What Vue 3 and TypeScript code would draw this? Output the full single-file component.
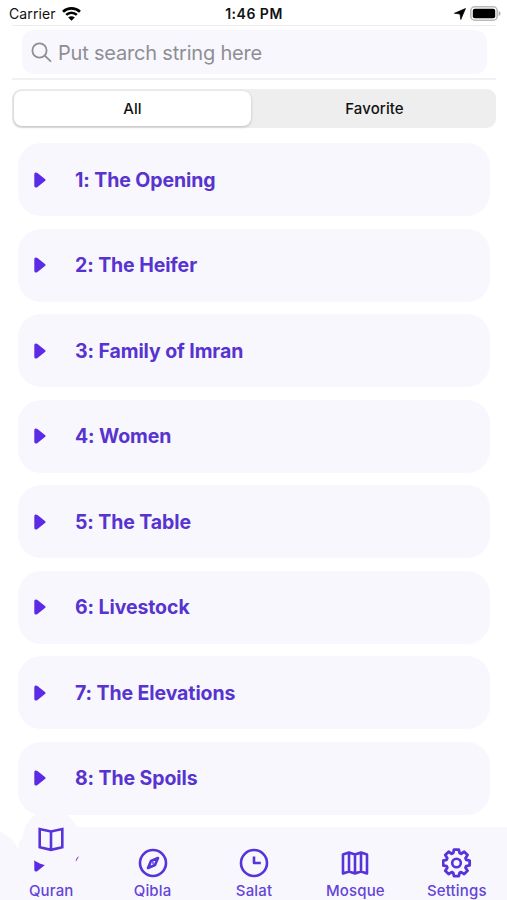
<script setup lang="ts">
import { ref } from 'vue'

const chapters: string[] = [
  'The Opening', 'The Heifer', 'Family of Imran', 'Women', 'The Table',
  'Livestock', 'The Elevations', 'The Spoils', 'Repentance',
]
const tabs: string[] = ['Quran', 'Qibla', 'Salat', 'Mosque', 'Settings']
const filter = ref<'All' | 'Favorite'>('All')
</script>

<template>
  <main class="screen">
    <header class="status">
      <div class="carrier">
        <span>Carrier</span>
        <svg width="19" height="14" viewBox="0 0 19 14">
          <path d="M1 4.700C5.800.3 13.200.3 18 4.700M4.200 7.900c3-2.900 7.600-2.900 10.600 0" fill="none" stroke="#000" stroke-width="2.600" />
          <path d="M9.500 13.800 6.200 10.600c1.900-1.700 4.700-1.700 6.600 0Z" />
        </svg>
      </div>
      <span class="time">1:46 PM</span>
      <div class="indicators">
        <svg width="12" height="12" viewBox="0 0 12 12"><path d="M11.500.5 6.800 11.500 6 6 .4 5.300Z" stroke="#000" stroke-width=".7" stroke-linejoin="round" /></svg>
        <svg width="31" height="15" viewBox="0 0 31 15">
          <rect x=".8" y=".8" width="26.400" height="13.400" rx="4" fill="#fff" stroke="#b9b9b6" stroke-width="1.600" />
          <rect x="2.800" y="2.800" width="22.400" height="9.400" rx="2" />
          <path d="M28.700 5v5c2.400-1 2.400-4 0-5Z" fill="#aaa" />
        </svg>
      </div>
    </header>

    <div class="search-wrap">
      <label class="search">
        <svg width="21" height="21" viewBox="0 0 21 21" fill="none" stroke="#8e8e94" stroke-width="1.800" stroke-linecap="round">
          <circle cx="8.500" cy="8.500" r="7.100" /><path d="m13.700 13.700 5.800 5.500" />
        </svg>
        <span>Put search string here</span>
      </label>
    </div>

    <div class="segments">
      <button :class="{ active: filter === 'All' }" @click="filter = 'All'">All</button>
      <button :class="{ active: filter === 'Favorite' }" @click="filter = 'Favorite'">Favorite</button>
    </div>

    <section class="list">
      <article v-for="(name, i) in chapters" :key="name" class="card">
        <svg width="12" height="16" viewBox="0 0 12 16"><path d="M1.200 2.200v11.600c0 1 .9 1.100 1.700.5L10.700 8 2.900 1.700C2.100 1.100 1.200 1.200 1.200 2.200Z" fill="#5b2be6" stroke="#5b2be6" stroke-width="1.800" stroke-linejoin="round" /></svg>
        <h2>{{ i + 1 }}: {{ name }}</h2>
      </article>
    </section>

    <nav class="tabbar">
      <svg class="tabbar-shape" width="507" height="90" viewBox="0 0 507 90" fill="#f8f7fe">
        <path d="M0 22C10 25 15 31 20 44Q27 66 51 66C68 66 76 53 80 44C86 30 92 17 107 17H507V90H0Z" />
        <circle cx="51" cy="28" r="28" />
      </svg>
      <div v-for="(tab, i) in tabs" :key="tab" class="tab" :class="{ raised: i === 0 }">
        <svg width="30" height="30" viewBox="0 0 30 30" fill="none" stroke="#5733da" stroke-width="2.600" stroke-linejoin="round">
          <path v-if="i === 0" stroke-linejoin="miter" d="M15 7.500 3.700 5v18.300L15 25.800l11.300-2.500V5ZM15 7.500v18.300" />
          <template v-else-if="i === 1">
            <circle cx="15" cy="15" r="13" />
            <path d="m20 10-3 7-7 3 3-7Z" /><circle cx="15" cy="15" r=".6" stroke-width="1" />
          </template>
          <template v-else-if="i === 2">
            <circle cx="15" cy="15" r="13" /><path d="M15 8.500V15h6.800" />
          </template>
          <path v-else-if="i === 3" d="M3 6.500 9 4.500l6 2 6-2 6 2v19l-6-2-6 2-6-2-6 2ZM9 4.500v19M15 6.500v19M21 4.500v19" />
          <template v-else>
            <path stroke-width="2.900" d="M12.500 2h5l.8 3.700 1.600.7 3.200-2.100 3.500 3.500-2.100 3.300.7 1.600 3.600.8v5l-3.600.8-.7 1.600 2.100 3.200-3.500 3.500-3.200-2.100-1.600.7-.8 3.600h-5l-.8-3.600-1.600-.7-3.200 2.100-3.500-3.500 2.100-3.200-.7-1.600-3.600-.8v-5l3.600-.8.7-1.600-2.100-3.300 3.500-3.500 3.200 2.100 1.600-.7Z" transform="translate(0 -.4) scale(.96)" />
            <circle cx="14.500" cy="15" r="4.300" />
          </template>
        </svg>
        <span>{{ tab }}</span>
      </div>
    </nav>
  </main>
</template>

<style>
body { margin: 0; background: #fff; }
</style>

<style scoped>
* { box-sizing: border-box; }
.screen { position: relative; width: 507px; height: 900px; overflow: hidden; background: #fff; font-family: Inter, sans-serif; color: #111; }
svg { display: block; flex: none; }
.status { height: 25px; padding: 2px 6px 0 9px; display: grid; grid-template-columns: 1fr auto 1fr; align-items: center; font-size: 14px; line-height: 22px; }
.carrier { display: flex; align-items: center; gap: 6px; letter-spacing: .1px; }
.time { font-weight: 600; letter-spacing: .5px; margin-right: 2px; }
.indicators { display: flex; justify-content: flex-end; align-items: center; gap: 4px; }
.search-wrap { height: 55px; margin: 0 11px 0 12px; padding: 4px 9px 0 10px; border-top: 1px solid #ebebed; border-bottom: 2px solid #f1f1f3; }
.search { height: 44px; padding-left: 9px; display: flex; align-items: center; gap: 6px; border-radius: 12px; background: #f8f7fe; color: #8e8e94; font-size: 20px; letter-spacing: -.2px; }
.search span { padding-top: 1px; }
.segments { height: 39px; margin: 9px 11px 0 12px; padding: 2px; display: grid; grid-template-columns: 237px 1fr; border-radius: 9px; background: #eee; }
.segments button { border: 0; padding: 0; border-radius: 8px; background: transparent; color: #111; font: 500 15px Inter, sans-serif; letter-spacing: .1px; }
.segments button:last-child { padding-left: 4px; }
.segments .active { background: #fff; box-shadow: 0 1px 3px rgba(0, 0, 0, .22); }
.list { margin: 15px 17px 0 18px; display: grid; grid-auto-rows: 73px; row-gap: 12.500px; }
.card { display: flex; align-items: center; gap: 29px; padding-left: 16px; border-radius: 23px; background: #f8f7fe; }
h2 { margin: 0; color: #5733cf; font-size: 19.500px; line-height: 24px; font-weight: 700; letter-spacing: -.09px; }
.tabbar { position: absolute; left: 0; bottom: 0; width: 507px; height: 90px; display: grid; grid-template-columns: repeat(5, 1fr); }
.tabbar-shape { position: absolute; inset: 0; }
.tab { position: relative; display: flex; flex-direction: column; align-items: center; padding: 38px 0 0 1px; }
.tab span { color: #6444d8; font-size: 15px; font-weight: 500; line-height: 20px; margin-top: 3px; letter-spacing: .15px; }
.raised { padding-top: 14px; }
.raised span { margin-top: 27px; }
</style>
